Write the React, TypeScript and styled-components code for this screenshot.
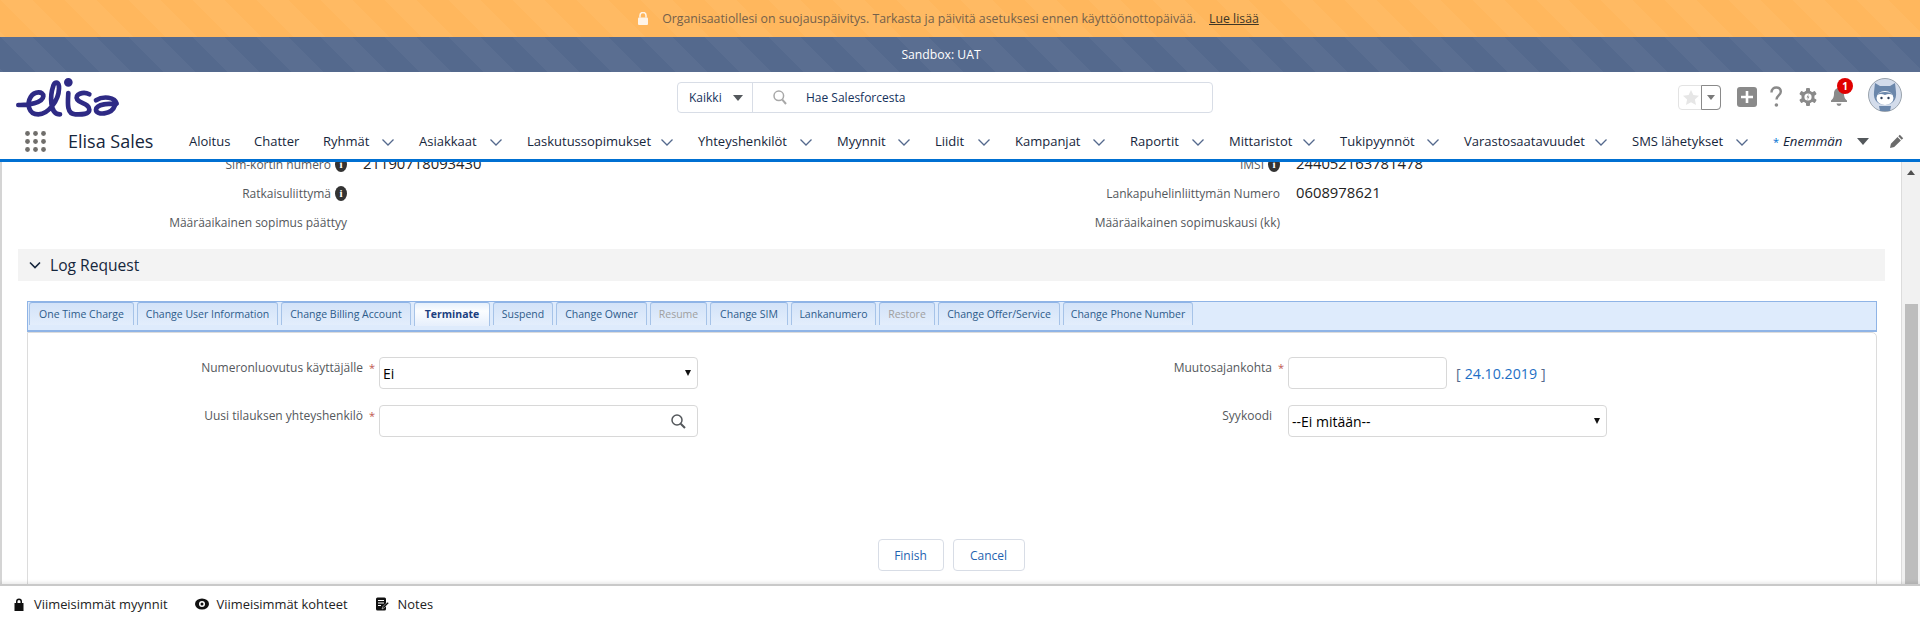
import React from 'react';
import styled, { createGlobalStyle } from 'styled-components';

const Global = createGlobalStyle`
  html, body {
    margin: 0;
    height: 100%;
    overflow: hidden;
    background: #fff;
    font-family: "Open Sans", "Noto Sans", sans-serif;
  }
  * { box-sizing: border-box; }
`;

const Page = styled.div`
  width: 1920px;
  height: 625px;
  display: flex;
  flex-direction: column;
  overflow: hidden;
`;

const stripes = `linear-gradient(45deg, rgba(255,255,255,.035) 25%, transparent 25%, transparent 50%, rgba(255,255,255,.035) 50%, rgba(255,255,255,.035) 75%, transparent 75%, transparent)`;

const Banner = styled.div`
  height: 37px;
  flex: none;
  background-color: #ffb75d;
  background-image: ${stripes};
  background-size: 64px 64px;
  display: flex;
  align-items: center;
  justify-content: center;
  padding-right: 24px;
  font-size: 12.3px;
  color: #75614a;
`;

const BannerLink = styled.span`
  color: #3e3626;
  text-decoration: underline;
  margin-left: 13px;
`;

const LockWrap = styled.span`
  display: flex;
  margin-right: 13px;
`;

const Sandbox = styled.div`
  height: 35px;
  flex: none;
  background-color: #54698d;
  background-image: ${stripes};
  background-size: 64px 64px;
  display: flex;
  align-items: center;
  justify-content: center;
  padding-right: 38px;
  font-size: 12.2px;
  color: #fff;
`;

const Header = styled.header`
  flex: none;
  background: #fff;
`;

const TopRow = styled.div`
  height: 58px;
  display: flex;
  align-items: center;
  padding-left: 15px;
`;

const Logo = styled.svg`
  width: 105px;
  height: 41px;
  margin-top: -8px;
`;

const Search = styled.div`
  margin-left: 557px;
  width: 536px;
  height: 31px;
  margin-top: -7px;
  border: 1px solid #d8dde6;
  border-radius: 4px;
  display: flex;
  align-items: center;
  font-size: 12px;
  color: #16325c;
`;

const ScopeBox = styled.div`
  width: 75px;
  height: 100%;
  border-right: 1px solid #d8dde6;
  display: flex;
  align-items: center;
  justify-content: space-between;
  padding: 0 9px 0 11px;
`;

const Triangle = styled.span`
  width: 0;
  height: 0;
  border-left: 5px solid transparent;
  border-right: 5px solid transparent;
  border-top: 6px solid #54585c;
`;

const SearchGlass = styled.svg`
  width: 14px;
  height: 15px;
  margin: 0 19px 0 20px;
`;

const Tools = styled.div`
  margin-left: 465px;
  margin-top: -8px;
  display: flex;
  align-items: center;
`;

const StarBox = styled.div`
  width: 43px;
  height: 25px;
  border: 1px solid #e3e3e3;
  border-radius: 4px;
  display: flex;
`;

const StarCell = styled.div`
  width: 23px;
  display: flex;
  align-items: center;
  justify-content: center;
`;

const StarArrow = styled.div`
  flex: 1;
  margin: -1px;
  border: 1px solid #8a8a8a;
  border-radius: 0 4px 4px 0;
  display: flex;
  align-items: center;
  justify-content: center;
`;

const SmallArrow = styled.span`
  width: 0;
  height: 0;
  border-left: 4px solid transparent;
  border-right: 4px solid transparent;
  border-top: 5px solid #7a7a7a;
`;

const PlusTile = styled.svg`
  width: 20px;
  height: 20px;
  margin-left: 16px;
`;

const ToolIcon = styled.svg<{ $w: number; $left: number }>`
  width: ${p => p.$w}px;
  height: 22px;
  margin-left: ${p => p.$left}px;
`;

const BellWrap = styled.div`
  position: relative;
  margin-left: 13px;
  display: flex;
`;

const Badge = styled.span`
  position: absolute;
  top: -9px;
  right: -5px;
  width: 16px;
  height: 16px;
  border-radius: 50%;
  background: #e00000;
  color: #fff;
  font-size: 10px;
  font-weight: 700;
  display: flex;
  align-items: center;
  justify-content: center;
`;

const Avatar = styled.svg`
  width: 34px;
  height: 34px;
  margin-left: 20px;
  margin-top: -4px;
`;

const NavRow = styled.nav`
  height: 29px;
  display: flex;
  align-items: center;
  padding: 0 0 7px 25px;
  font-size: 13px;
  color: #16263c;
`;

const WaffleDots = styled.svg`
  width: 21px;
  height: 21px;
  flex: none;
`;

const AppName = styled.div`
  width: 143px;
  flex: none;
  padding-left: 22px;
  font-size: 18px;
  color: #16263c;
  white-space: nowrap;
`;

const NavItem = styled.div<{ $w: number; $chev: boolean }>`
  width: ${p => p.$w}px;
  flex: none;
  display: flex;
  align-items: center;
  justify-content: space-between;
  padding-right: ${p => (p.$chev ? 25 : 0)}px;
  white-space: nowrap;
`;

const NavChevron = styled.svg`
  width: 12px;
  height: 7px;
  flex: none;
  margin-top: 2px;
`;

const MoreItem = styled.div`
  width: 96px;
  flex: none;
  display: flex;
  align-items: center;
  font-style: italic;
  font-size: 13.3px;
  white-space: nowrap;
`;

const Asterisk = styled.span`
  color: #0070d2;
  font-style: normal;
  width: 10px;
  font-size: 11px;
`;

const MoreArrow = styled.span`
  margin-left: auto;
  width: 0;
  height: 0;
  border-left: 6px solid transparent;
  border-right: 6px solid transparent;
  border-top: 7px solid #54585c;
`;

const Pencil = styled.svg`
  width: 14px;
  height: 14px;
  margin-left: 21px;
`;

const BlueLine = styled.div`
  height: 3px;
  background: #0070d2;
`;

const Main = styled.main`
  flex: 1;
  min-height: 0;
  display: flex;
`;

const Scroller = styled.div`
  flex: 1;
  min-width: 0;
  overflow: hidden;
  border-left: 2px solid #d4d4d4;
  display: flex;
  flex-direction: column;
`;

const Details = styled.div`
  margin-top: -12px;
  flex: none;
`;

const DetailRow = styled.div`
  height: 29px;
  display: grid;
  grid-template-columns: 345px 580px 353px 1fr;
  align-items: center;
`;

const DetailLabel = styled.div`
  display: flex;
  justify-content: flex-end;
  align-items: center;
  gap: 4px;
  font-size: 12px;
  color: #54585c;
  white-space: nowrap;
`;

const DetailValue = styled.div`
  padding: 0 0 3px 16px;
  font-size: 14.8px;
  color: #222;
`;

const Info = styled.span`
  width: 12px;
  height: 15px;
  border-radius: 50%;
  background: #333;
  color: #fff;
  font-size: 11px;
  font-weight: 700;
  line-height: 15px;
  text-align: center;
  font-family: "Liberation Serif", serif;
`;

const SectionHead = styled.div`
  flex: none;
  height: 32px;
  margin: 12px 16px 0;
  background: #f3f3f3;
  display: flex;
  align-items: center;
  padding: 0 0 1px 11px;
  gap: 9px;
  font-size: 15.6px;
  color: #16263c;
`;

const FormArea = styled.div`
  flex: none;
  margin: 20px 24px 0 25px;
`;

const TabBar = styled.div`
  height: 31px;
  background: #deebfc;
  border: 1px solid #8fb4e6;
  border-bottom-width: 2px;
  display: flex;
  gap: 3px;
  padding-left: 1px;
  align-items: flex-start;
`;

const Tab = styled.div<{ $w: number; $active?: boolean; $disabled?: boolean }>`
  width: ${p => p.$w}px;
  height: ${p => (p.$active ? 24 : 23)}px;
  flex: none;
  border: 1px solid #a6c3e8;
  border-top-color: #8fb4e6;
  border-bottom: 0;
  border-radius: 3px 3px 0 0;
  background: ${p => (p.$active
    ? 'linear-gradient(#e6f0fc, #fbfdff 35%, #e6effc)'
    : 'linear-gradient(#d3e3f8, #e3eefc)')};
  color: ${p => (p.$disabled ? '#a0a0a0' : p.$active ? '#1b3f80' : '#2d5b8a')};
  font-weight: ${p => (p.$active ? 700 : 400)};
  font-size: 10.5px;
  line-height: 22px;
  text-align: center;
  white-space: nowrap;
`;

const FormPanel = styled.div`
  height: 300px;
  border: 1px solid #dcdcdc;
  border-radius: 0 5px 0 0;
  padding-top: 24px;
`;

const FormGrid = styled.div`
  display: grid;
  grid-template-columns: 351px 319px 590px 1fr;
  grid-auto-rows: 32px;
  row-gap: 16px;
`;

const FieldLabel = styled.div`
  display: flex;
  justify-content: flex-end;
  padding-top: 2px;
  font-size: 12px;
  line-height: 18px;
  color: #54585c;
  white-space: nowrap;
`;

const Star = styled.span<{ $show: boolean }>`
  width: 16px;
  text-align: center;
  padding-left: 2px;
  font-size: 11px;
  color: #c0574f;
  visibility: ${p => (p.$show ? 'visible' : 'hidden')};
`;

const Field = styled.div<{ $w?: number }>`
  width: ${p => (p.$w ? `${p.$w}px` : '100%')};
  height: 32px;
  border: 1px solid #d8d8d8;
  border-radius: 4px;
  background: #fff;
  display: flex;
  align-items: center;
  justify-content: space-between;
  padding: 0 6px 0 3px;
  font-size: 14px;
  color: #000;
`;

const SelectArrow = styled.span`
  width: 0;
  height: 0;
  margin-top: -1px;
  border-left: 3px solid transparent;
  border-right: 3px solid transparent;
  border-top: 6px solid #111;
`;

const LookupIcon = styled.svg`
  width: 15px;
  height: 15px;
  margin-right: 5px;
`;

const DateCell = styled.div`
  display: flex;
  align-items: center;
  gap: 9px;
  font-size: 14.2px;
  color: #54698d;
`;

const DateLink = styled.span`
  color: #1d6fc5;
  margin: 0 4px;
`;

const Actions = styled.div`
  display: flex;
  justify-content: center;
  gap: 9px;
  margin-top: 102px;
  padding-right: 2px;
`;

const Button = styled.div<{ $w: number }>`
  width: ${p => p.$w}px;
  height: 32px;
  border: 1px solid #d8dde6;
  border-radius: 4px;
  background: #fff;
  color: #1f63b0;
  font-size: 12px;
  display: flex;
  align-items: center;
  justify-content: center;
`;

const ScrollTrack = styled.div`
  width: 19px;
  flex: none;
  background: #f1f1f1;
  border-left: 1px solid #dcdcdc;
  display: flex;
  flex-direction: column;
  align-items: center;
  padding-top: 8px;
`;

const ScrollUp = styled.span`
  width: 0;
  height: 0;
  border-left: 4px solid transparent;
  border-right: 4px solid transparent;
  border-bottom: 5px solid #505050;
`;

const ScrollThumb = styled.div`
  width: 13px;
  margin-top: 129px;
  flex: 1;
  background: #bdbdbd;
`;

const Footer = styled.footer`
  height: 41px;
  flex: none;
  border-top: 2px solid #c9c9c9;
  box-shadow: 0 -2px 3px rgba(0, 0, 0, 0.08);
  background: #fff;
  position: relative;
  display: flex;
  align-items: center;
  padding: 0 0 3px 12px;
  font-size: 12.9px;
  color: #222;
`;

const DockItem = styled.div`
  display: flex;
  align-items: center;
  margin-right: 27px;
  white-space: nowrap;
`;

const DockIcon = styled.svg<{ $gap: number }>`
  width: 14px;
  height: 14px;
  margin-right: ${p => p.$gap}px;
`;

const navItems: { label: string; w: number; chev: boolean }[] = [
  { label: 'Aloitus', w: 65, chev: false },
  { label: 'Chatter', w: 69, chev: false },
  { label: 'Ryhmät', w: 96, chev: true },
  { label: 'Asiakkaat', w: 108, chev: true },
  { label: 'Laskutussopimukset', w: 171, chev: true },
  { label: 'Yhteyshenkilöt', w: 139, chev: true },
  { label: 'Myynnit', w: 98, chev: true },
  { label: 'Liidit', w: 80, chev: true },
  { label: 'Kampanjat', w: 115, chev: true },
  { label: 'Raportit', w: 99, chev: true },
  { label: 'Mittaristot', w: 111, chev: true },
  { label: 'Tukipyynnöt', w: 124, chev: true },
  { label: 'Varastosaatavuudet', w: 168, chev: true },
  { label: 'SMS lähetykset', w: 141, chev: true },
];

const tabs: { label: string; w: number; active?: boolean; disabled?: boolean }[] = [
  { label: 'One Time Charge', w: 105 },
  { label: 'Change User Information', w: 141 },
  { label: 'Change Billing Account', w: 130 },
  { label: 'Terminate', w: 76, active: true },
  { label: 'Suspend', w: 60 },
  { label: 'Change Owner', w: 91 },
  { label: 'Resume', w: 57, disabled: true },
  { label: 'Change SIM', w: 78 },
  { label: 'Lankanumero', w: 85 },
  { label: 'Restore', w: 56, disabled: true },
  { label: 'Change Offer/Service', w: 122 },
  { label: 'Change Phone Number', w: 130 },
];

function ElisaLogo() {
  return (
    <Logo viewBox="45 20 315 123" fill="none" stroke="#2e2a85" strokeWidth="14" strokeLinecap="round" strokeLinejoin="round">
      <path d="M55 104 C85 105 128 98 130 78 C131 62 103 62 92 80 C80 100 85 132 115 132 C145 132 176 90 177 55 C178 35 166 30 160 46 C150 75 148 132 180 132" />
      <path d="M205 68 C203 100 200 132 226 132 C245 133 268 132 268 118 C268 100 240 100 232 88 C222 72 250 62 268 72" />
      <path d="M288 90 C310 76 345 80 350 100 C330 100 290 100 288 118 C288 135 335 135 345 105" />
      <circle cx="205" cy="36" r="6" fill="#2e2a85" />
    </Logo>
  );
}

function Chevron() {
  return (
    <NavChevron viewBox="0 0 12 7" fill="none" stroke="#54698d" strokeWidth="1.3">
      <path d="M0.5 0.5 L6 6 L11.5 0.5" />
    </NavChevron>
  );
}

export default function App() {
  return (
    <Page>
      <Global />
      <Banner>
        <LockWrap>
          <svg width="12" height="13" viewBox="0 0 12 13">
            <path d="M3 5.5V3.5a3 3 0 0 1 6 0v2" fill="none" stroke="#fff" strokeWidth="1.5" opacity="0.85" />
            <rect x="1" y="5.5" width="10" height="7.5" rx="1" fill="#fff" opacity="0.85" />
          </svg>
        </LockWrap>
        Organisaatiollesi on suojauspäivitys. Tarkasta ja päivitä asetuksesi ennen käyttöönottopäivää.
        <BannerLink>Lue lisää</BannerLink>
      </Banner>
      <Sandbox>Sandbox: UAT</Sandbox>
      <Header>
        <TopRow>
          <ElisaLogo />
          <Search>
            <ScopeBox>Kaikki<Triangle /></ScopeBox>
            <SearchGlass viewBox="0 0 14 15" fill="none" stroke="#a8a8a8" strokeWidth="1.5">
              <circle cx="5.8" cy="5.8" r="4.8" />
              <path d="M9.3 9.6 L13 14" strokeWidth="2" />
            </SearchGlass>
            Hae Salesforcesta
          </Search>
          <Tools>
            <StarBox>
              <StarCell>
                <svg width="16" height="15" viewBox="0 0 16 15">
                  <path d="M8 0l2.4 5.1 5.6.7-4.1 3.8 1.1 5.4L8 12.3 3 15l1.1-5.4L0 5.8l5.6-.7z" fill="#e6e6e6" />
                </svg>
              </StarCell>
              <StarArrow><SmallArrow /></StarArrow>
            </StarBox>
            <PlusTile viewBox="0 0 20 20">
              <rect width="20" height="20" rx="3" fill="#8a8a8a" />
              <path d="M10 4v12M4 10h12" stroke="#fff" strokeWidth="2.6" />
            </PlusTile>
            <ToolIcon $w={12} $left={13} viewBox="0 0 12 22">
              <path d="M1.5 6.5C1.5 3 4 1.5 6.3 1.5 9 1.5 10.8 3.3 10.8 5.8c0 3.4-4.3 3.8-4.3 7.6" fill="none" stroke="#8a8a8a" strokeWidth="2.4" />
              <circle cx="6.4" cy="19" r="1.8" fill="#8a8a8a" />
            </ToolIcon>
            <ToolIcon $w={18} $left={17} viewBox="0 0 18 22">
              <g transform="translate(9 11)" fill="#8a8a8a">
                <circle r="6.5" />
                <rect x="-2" y="-9" width="4" height="18" rx="1" />
                <rect x="-2" y="-9" width="4" height="18" rx="1" transform="rotate(60)" />
                <rect x="-2" y="-9" width="4" height="18" rx="1" transform="rotate(120)" />
                <circle r="3.6" fill="#fff" />
                <path d="M0.8 -3.4 L-1.4 0.6 L0 0.6 L-0.8 3.4 L1.4 -0.6 L0 -0.6 Z" fill="#8a8a8a" />
              </g>
            </ToolIcon>
            <BellWrap>
              <svg width="18" height="20" viewBox="0 0 18 20">
                <path d="M9 1c-3.4 0-5 2.6-5 5.5 0 4-1.2 5.4-3 7v1.5h16v-1.5c-1.8-1.6-3-3-3-7C14 3.6 12.4 1 9 1z" fill="#8a8a8a" />
                <path d="M6.5 16.5h5a2.5 2.5 0 0 1-5 0z" fill="#8a8a8a" />
              </svg>
              <Badge>1</Badge>
            </BellWrap>
            <Avatar viewBox="0 0 34 34">
              <circle cx="17" cy="17" r="16.5" fill="#d3dceb" stroke="#9aa3ad" />
              <path d="M7 5l5 3h10l5-3 1 9c1 8-4 13-11 13S5 22 6 14z" fill="#6b87ab" />
              <ellipse cx="17" cy="20" rx="8.5" ry="7" fill="#fff" />
              <path d="M9 17c2-4 14-4 16 0-3-1.5-5-1.5-8 0-3-1.5-5-1.5-8 0z" fill="#6b87ab" />
              <circle cx="13.5" cy="20" r="1.2" fill="#30405a" />
              <circle cx="20.5" cy="20" r="1.2" fill="#30405a" />
              <path d="M11 28h12l-1 5H12z" fill="#6b87ab" />
            </Avatar>
          </Tools>
        </TopRow>
        <NavRow>
          <WaffleDots viewBox="0 0 21 21" fill="#706e6b">
            {[2.5, 10.5, 18.5].flatMap(y =>
              [2.5, 10.5, 18.5].map(x => <circle key={`${x}-${y}`} cx={x} cy={y} r="2.4" />)
            )}
          </WaffleDots>
          <AppName>Elisa Sales</AppName>
          {navItems.map(item => (
            <NavItem key={item.label} $w={item.w} $chev={item.chev}>
              {item.label}
              {item.chev && <Chevron />}
            </NavItem>
          ))}
          <MoreItem>
            <Asterisk>*</Asterisk>
            Enemmän
            <MoreArrow />
          </MoreItem>
          <Pencil viewBox="0 0 14 14" fill="#6b6b6b">
            <path d="M9.8 0.8l3.4 3.4-1.5 1.5-3.4-3.4zM7.5 3l3.4 3.4-6.7 6.7L0 14l0.9-4.3z" />
          </Pencil>
        </NavRow>
        <BlueLine />
      </Header>
      <Main>
        <Scroller>
          <Details>
            <DetailRow>
              <DetailLabel>Sim-kortin numero <Info>i</Info></DetailLabel>
              <DetailValue>21190718093430</DetailValue>
              <DetailLabel>IMSI <Info>i</Info></DetailLabel>
              <DetailValue>244052163781478</DetailValue>
            </DetailRow>
            <DetailRow>
              <DetailLabel>Ratkaisuliittymä <Info>i</Info></DetailLabel>
              <DetailValue />
              <DetailLabel>Lankapuhelinliittymän Numero</DetailLabel>
              <DetailValue>0608978621</DetailValue>
            </DetailRow>
            <DetailRow>
              <DetailLabel>Määräaikainen sopimus päättyy</DetailLabel>
              <DetailValue />
              <DetailLabel>Määräaikainen sopimuskausi (kk)</DetailLabel>
              <DetailValue />
            </DetailRow>
          </Details>
          <SectionHead>
            <svg width="12" height="8" viewBox="0 0 12 8" fill="none" stroke="#16263c" strokeWidth="1.6">
              <path d="M1 1.5 L6 6.5 L11 1.5" />
            </svg>
            Log Request
          </SectionHead>
          <FormArea>
            <TabBar>
              {tabs.map(t => (
                <Tab key={t.label} $w={t.w} $active={t.active} $disabled={t.disabled}>{t.label}</Tab>
              ))}
            </TabBar>
            <FormPanel>
              <FormGrid>
                <FieldLabel>Numeronluovutus käyttäjälle<Star $show>*</Star></FieldLabel>
                <Field>Ei<SelectArrow /></Field>
                <FieldLabel>Muutosajankohta<Star $show>*</Star></FieldLabel>
                <DateCell>
                  <Field $w={159} />
                  <span>[<DateLink>24.10.2019</DateLink>]</span>
                </DateCell>
                <FieldLabel>Uusi tilauksen yhteyshenkilö<Star $show>*</Star></FieldLabel>
                <Field>
                  <span />
                  <LookupIcon viewBox="0 0 15 15" fill="none" stroke="#54585c" strokeWidth="1.5">
                    <circle cx="6" cy="6" r="5" />
                    <path d="M9.7 9.7 L14 14" strokeWidth="2" />
                  </LookupIcon>
                </Field>
                <FieldLabel>Syykoodi<Star $show={false}>*</Star></FieldLabel>
                <Field $w={319}>--Ei mitään--<SelectArrow /></Field>
              </FormGrid>
              <Actions>
                <Button $w={66}>Finish</Button>
                <Button $w={72}>Cancel</Button>
              </Actions>
            </FormPanel>
          </FormArea>
        </Scroller>
        <ScrollTrack>
          <ScrollUp />
          <ScrollThumb />
        </ScrollTrack>
      </Main>
      <Footer>
        <DockItem>
          <DockIcon $gap={8} viewBox="0 0 14 14" fill="#111">
            <path d="M4 6V4.5a3 3 0 0 1 6 0V6h1.5v8h-9V6zM5.5 6h3V4.5a1.5 1.5 0 0 0-3 0z" />
          </DockIcon>
          Viimeisimmät myynnit
        </DockItem>
        <DockItem>
          <DockIcon $gap={8} viewBox="0 0 14 14">
            <ellipse cx="7" cy="7" rx="7" ry="5.5" fill="#111" />
            <circle cx="7" cy="7" r="3" fill="#fff" />
            <circle cx="7" cy="7" r="1.5" fill="#111" />
          </DockIcon>
          Viimeisimmät kohteet
        </DockItem>
        <DockItem>
          <DockIcon $gap={9} viewBox="0 0 14 14">
            <rect x="1" y="0.5" width="10" height="13" rx="1.5" fill="#111" />
            <path d="M3 3.5h6M3 6h6M3 8.5h3" stroke="#fff" strokeWidth="1" />
            <path d="M7 12l1-2.500 4.500-4.500 1.300 1.300-4.500 4.500z" fill="#111" stroke="#fff" strokeWidth="0.5" />
          </DockIcon>
          Notes
        </DockItem>
      </Footer>
    </Page>
  );
}
